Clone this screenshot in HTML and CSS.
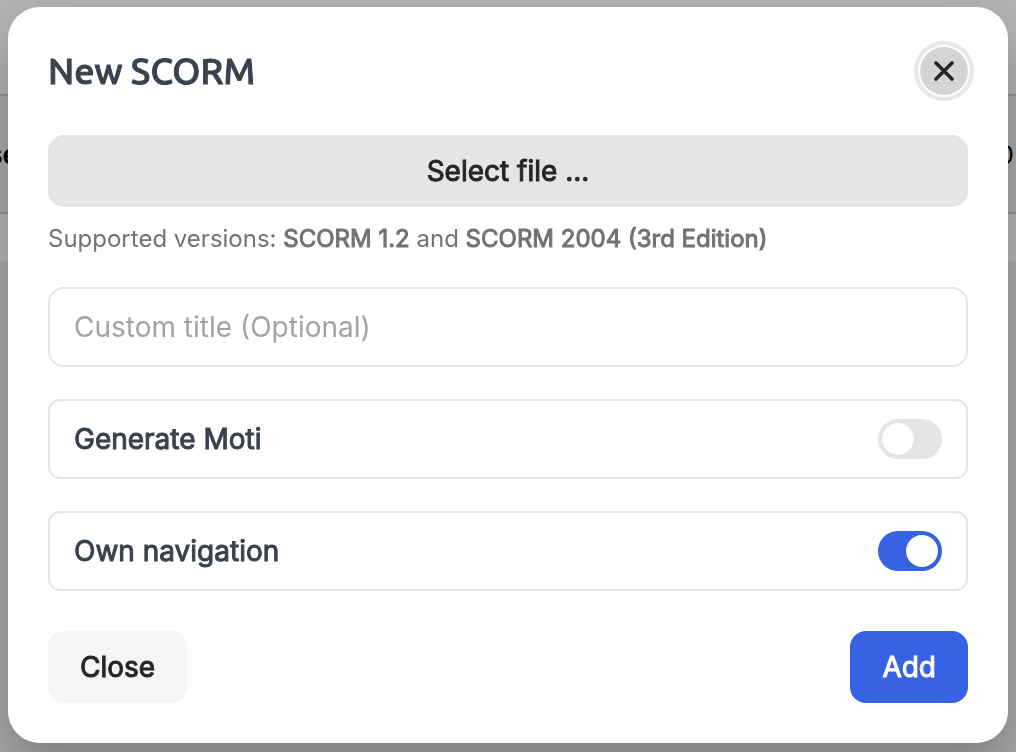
FILE: index.html
```
<!DOCTYPE html>
<html lang="en">
<head>
    <meta charset="UTF-8">
    <meta name="viewport" content="width=device-width, initial-scale=1.0">
    <title>New SCORM</title>
    <link rel="stylesheet" href="styles.css">
</head>
<body>
    <div class="page">
        <div class="page-header"></div>
        <div class="page-row">
            <strong class="page-label">se</strong>
            <span>0</span>
        </div>
        <div class="page-footer"></div>
    </div>

    <div class="overlay">
        <form class="modal" role="dialog" aria-modal="true" aria-labelledby="modal-title">
            <header class="modal-header">
                <h1 id="modal-title">New SCORM</h1>
                <button type="button" class="btn-close" aria-label="Close dialog">
                    <svg width="24" height="24" viewBox="0 0 24 24" fill="none" stroke="currentColor" stroke-width="3.6" stroke-linecap="round">
                        <path d="M4 4L20 20M20 4L4 20"/>
                    </svg>
                </button>
            </header>

            <button type="button" class="btn btn-file">Select file ...</button>
            <p class="hint">Supported versions: <strong>SCORM 1.2</strong> and <strong>SCORM 2004 (3rd Edition)</strong></p>

            <input type="text" class="text-input" placeholder="Custom title (Optional)" aria-label="Custom title">

            <div class="option">
                <label for="moti">Generate Moti</label>
                <input type="checkbox" role="switch" class="toggle" id="moti">
            </div>
            <div class="option">
                <label for="navigation">Own navigation</label>
                <input type="checkbox" role="switch" class="toggle" id="navigation" checked>
            </div>

            <footer class="modal-footer">
                <button type="button" class="btn btn-light">Close</button>
                <button type="submit" class="btn btn-primary">Add</button>
            </footer>
        </form>
    </div>
</body>
</html>
```
FILE: styles.css
```
* {
    box-sizing: border-box;
}

body {
    margin: 0;
    min-height: 100vh;
    overflow: hidden;
    font-family: Inter, "Liberation Sans", sans-serif;
    font-size: 28px;
    color: #262626;
    background: #f0f0f0;
}

/* Page behind the dialog */
.page-header {
    height: 94px;
    background: #fff;
}

.page-row {
    display: flex;
    justify-content: space-between;
    align-items: center;
    height: 120px;
    padding-right: 2px;
    border-top: 2px solid #d1d5db;
    border-bottom: 2px solid #d1d5db;
    background: #f0f0f0;
    color: #000;
    font-size: 26px;
}

.page-label {
    margin-left: -12px;
}

.page-footer {
    height: 48px;
    background: #fff;
}

/* Dialog */
.overlay {
    position: fixed;
    inset: 0;
    padding: 7px 8px 9px;
    background: rgba(0, 0, 0, 0.3);
}

.modal {
    padding: 40px;
    border-radius: 32px;
    background: #fff;
    box-shadow: 0 24px 50px rgba(0, 0, 0, 0.25);
}

.modal-header {
    display: flex;
    justify-content: space-between;
    align-items: center;
    margin-bottom: 40px;
}

.modal-header h1 {
    margin: 0;
    font-family: Ubuntu, "Noto Sans", sans-serif;
    font-size: 36px;
    font-weight: 500;
    line-height: 48px;
    color: #3a424e;
    -webkit-text-stroke: 1px;
}

.btn-close {
    display: flex;
    justify-content: center;
    align-items: center;
    width: 48px;
    height: 48px;
    padding: 0;
    border: 0;
    border-radius: 50%;
    background: #d4d4d4;
    color: #262626;
    box-shadow: 0 0 0 2px #fff, 0 0 0 6px #e8e8e8;
}

.btn {
    height: 72px;
    padding: 0 32px;
    border: 0;
    border-radius: 16px;
    font-family: inherit;
    font-size: 28px;
    font-weight: 400;
    color: #262626;
    -webkit-text-stroke: 1px;
}

.btn-file {
    width: 100%;
    background: #e5e5e5;
}

.btn-light {
    background: #f5f5f5;
}

.btn-primary {
    background: #3662e3;
    color: #fff;
}

.hint {
    margin: 16px 0 32px;
    font-size: 24px;
    line-height: 32px;
    color: #737373;
}

.hint strong {
    font-weight: 400;
    -webkit-text-stroke: 1px;
}

.text-input {
    display: block;
    width: 100%;
    height: 80px;
    padding: 0 24px;
    border: 2px solid #e5e5e5;
    border-radius: 16px;
    font-family: inherit;
    font-size: 28px;
    color: #3a424e;
}

.text-input::placeholder {
    color: #a3a3a3;
}

.option {
    display: flex;
    justify-content: space-between;
    align-items: center;
    height: 80px;
    margin-top: 32px;
    padding: 0 24px;
    border: 2px solid #e5e5e5;
    border-radius: 12px;
    color: #3a424e;
    -webkit-text-stroke: 1px;
}

.toggle {
    appearance: none;
    display: flex;
    width: 64px;
    height: 40px;
    margin: 0;
    padding: 4px;
    border-radius: 20px;
    background: #e5e5e5;
}

.toggle::before {
    content: "";
    width: 32px;
    height: 32px;
    border-radius: 50%;
    background: #fff;
    box-shadow: 0 1px 2px rgba(0, 0, 0, 0.06);
}

.toggle:checked {
    justify-content: flex-end;
    background: #3662e3;
}

.modal-footer {
    display: flex;
    justify-content: space-between;
    margin-top: 40px;
}
```
